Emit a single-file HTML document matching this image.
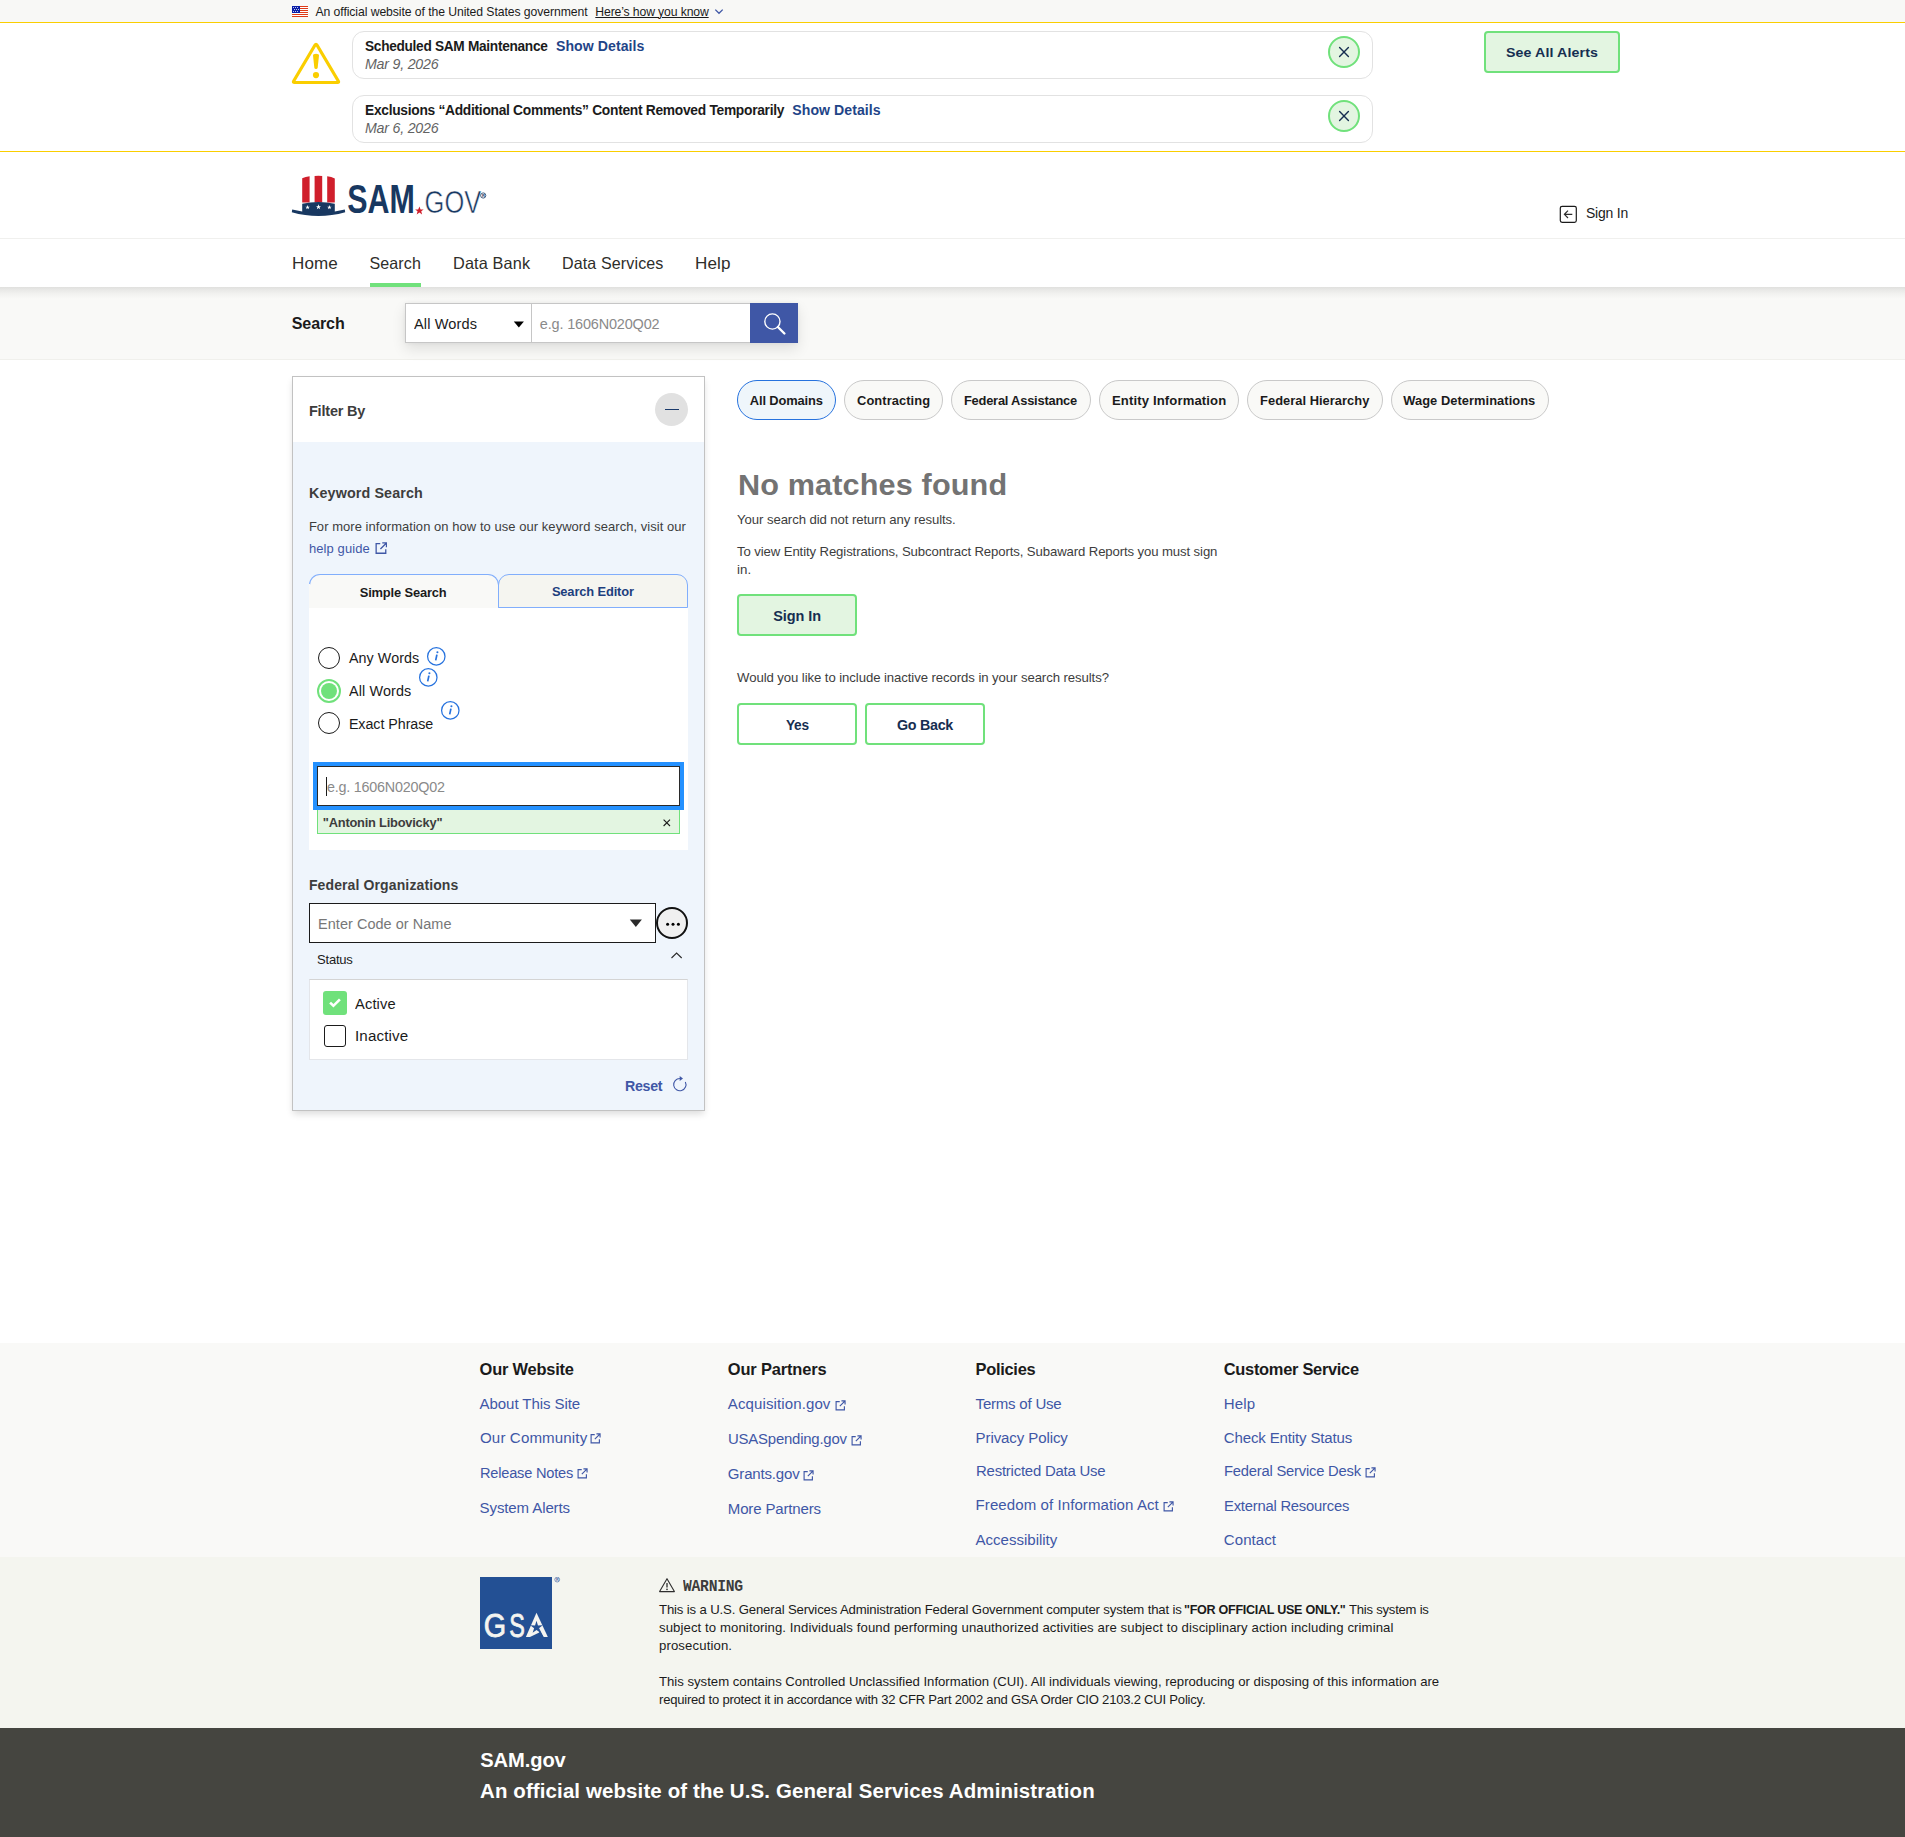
<!DOCTYPE html><html lang="en"><head><meta charset="utf-8"><title>SAM.gov | Search</title><style>
html,body{margin:0;padding:0;background:#fff}
body{width:1905px;height:1837px;position:relative;overflow:hidden;font-family:"Liberation Sans",sans-serif}
.a{position:absolute}
.t{position:absolute;white-space:pre;line-height:1;margin:0;padding:0;transform-origin:0 50%}
.card{width:1021px;height:48px;box-sizing:border-box;border:1px solid #e2e2e2;border-radius:12px;background:#fff}
.xbtn{width:32px;height:32px;box-sizing:border-box;border:2px solid #70e17b;border-radius:50%;background:#e3f5e1}
.gbtn{box-sizing:border-box;border:2px solid #70e17b;border-radius:4px;background:#fff}
.gbtn.fill{background:#e3f5e1}
.pill{top:380px;height:40px;box-sizing:border-box;border:1px solid #c9c9c9;border-radius:20px;background:#f9f9f7}
.pill.sel{border-color:#2672de;background:#eff6fb}
.ext{fill:none;stroke:#3f57a6;stroke-width:1.35}
.info{fill:none;stroke:#2672de;stroke-width:1.25}
.info .f{fill:#2672de;stroke:none}
</style></head><body>
<!-- backgrounds -->
<div class="a" style="left:0;top:0;width:1905px;height:22px;background:#f8f8f6"></div>
<div class="a" style="left:0;top:22px;width:1905px;height:1px;background:#face00"></div>
<div class="a" style="left:0;top:151px;width:1905px;height:1px;background:#face00"></div>
<div class="a" style="left:0;top:238px;width:1905px;height:1px;background:#f0f0ee"></div>
<div class="a" style="left:0;top:287px;width:1905px;height:72px;background:linear-gradient(#e0e0de 0,#e9e9e7 3px,#f2f2f0 7px,#f9f9f7 12px);border-bottom:1px solid #f0f0ec"></div>
<div class="a" style="left:0;top:1343px;width:1905px;height:214px;background:#f9f9f7"></div>
<div class="a" style="left:0;top:1557px;width:1905px;height:171px;background:#f4f5ef"></div>
<div class="a" style="left:0;top:1728px;width:1905px;height:109px;background:#454540"></div>

<!-- flag -->
<svg class="a" style="left:292px;top:6px" width="16" height="11" viewBox="0 0 16 11" shape-rendering="crispEdges">
<rect width="16" height="11" fill="#fff"/>
<g fill="#de3a17"><rect y="0" width="16" height="1"/><rect y="2" width="16" height="1"/><rect y="4" width="16" height="1"/><rect y="6" width="16" height="1"/><rect y="8" width="16" height="1"/><rect y="10" width="16" height="1"/></g>
<rect width="8" height="7" fill="#0b1fa8"/>
<g fill="#fff" shape-rendering="auto"><circle cx="1.5" cy="1.6" r=".5"/><circle cx="3.5" cy="1.6" r=".5"/><circle cx="5.5" cy="1.6" r=".5"/><circle cx="2.5" cy="3.5" r=".5"/><circle cx="4.5" cy="3.5" r=".5"/><circle cx="6.5" cy="3.5" r=".5"/><circle cx="1.5" cy="5.4" r=".5"/><circle cx="3.5" cy="5.4" r=".5"/><circle cx="5.5" cy="5.4" r=".5"/></g>
</svg>
<!-- chevron -->
<svg class="a" style="left:714px;top:8px" width="10" height="7" viewBox="0 0 10 7"><path d="M1.3 1.6 L5 5.3 L8.7 1.6" fill="none" stroke="#3f57a6" stroke-width="1.3"/></svg>

<!-- alert icon -->
<svg class="a" style="left:290px;top:40px" width="52" height="46" viewBox="290 40 52 46">
<path d="M314.9 45.2 Q316 43.3 317.1 45.2 L338.3 81 Q339.2 82.5 337.4 82.5 L294.6 82.5 Q292.8 82.5 293.7 81 Z" fill="none" stroke="#face00" stroke-width="3.2" stroke-linejoin="round"/>
<path d="M313 55.6 Q313 53.8 316 53.8 Q319 53.8 319 55.6 L317.7 67.6 Q317.5 69.1 316 69.1 Q314.5 69.1 314.3 67.6 Z" fill="#face00"/>
<circle cx="316" cy="75.1" r="3.1" fill="#face00"/>
</svg>
<!-- alert cards -->
<div class="a card" style="left:352px;top:31px"></div>
<div class="a card" style="left:352px;top:95px"></div>
<div class="a xbtn" style="left:1328px;top:36px"><svg width="28" height="28" viewBox="0 0 28 28"><path d="M9.6 9.6 L18.4 18.4 M18.4 9.6 L9.6 18.4" stroke="#162e51" stroke-width="1.4" stroke-linecap="round"/></svg></div>
<div class="a xbtn" style="left:1328px;top:100px"><svg width="28" height="28" viewBox="0 0 28 28"><path d="M9.6 9.6 L18.4 18.4 M18.4 9.6 L9.6 18.4" stroke="#162e51" stroke-width="1.4" stroke-linecap="round"/></svg></div>
<div class="a gbtn fill" style="left:1484px;top:31px;width:136px;height:42px"></div>

<!-- logo -->
<svg class="a" style="left:288px;top:172px" width="204" height="48" viewBox="288 172 204 48">
<g fill="#d01f2c">
<path d="M302.2 178.2 Q305.5 176.6 309.6 176.2 V202.6 H302.2 Z"/>
<path d="M314.6 175.9 Q318.5 175.5 322.2 175.9 V202.6 H314.6 Z"/>
<path d="M327.2 176.2 Q331.5 176.8 334.8 178.4 V202.6 H327.2 Z"/>
</g>
<path d="M302.2 203.8 Q318.5 200 334.8 203.8 V213.6 H302.2 Z" fill="#183861"/>
<path d="M292.2 209.6 Q318.5 216.6 344.8 209.6 L345.2 212.2 Q318.5 219.8 291.8 212.2 Z" fill="#183861"/>
<g fill="#fff">
<path id="st" d="M0 -2.3 L0.62 -0.72 L2.2 -0.72 L0.95 0.3 L1.4 1.9 L0 0.95 L-1.4 1.9 L-0.95 0.3 L-2.2 -0.72 L-0.62 -0.72 Z" transform="translate(307.6 207.4)"/>
<path d="M0 -2.3 L0.62 -0.72 L2.2 -0.72 L0.95 0.3 L1.4 1.9 L0 0.95 L-1.4 1.9 L-0.95 0.3 L-2.2 -0.72 L-0.62 -0.72 Z" transform="translate(318.5 207) scale(1.15)"/>
<path d="M0 -2.3 L0.62 -0.72 L2.2 -0.72 L0.95 0.3 L1.4 1.9 L0 0.95 L-1.4 1.9 L-0.95 0.3 L-2.2 -0.72 L-0.62 -0.72 Z" transform="translate(329.4 207.4)"/>
</g>
<text x="347.2" y="213" font-family="Liberation Sans, sans-serif" font-weight="700" font-size="40.5" fill="#183861" textLength="67.6" lengthAdjust="spacingAndGlyphs">SAM</text>
<path d="M0 -4.4 L1.2 -1.4 L4.3 -1.4 L1.85 0.55 L2.7 3.6 L0 1.8 L-2.7 3.6 L-1.85 0.55 L-4.3 -1.4 L-1.2 -1.4 Z" transform="translate(419.4 210.8)" fill="#d01f2c"/>
<text x="424.6" y="213" font-family="Liberation Sans, sans-serif" font-weight="400" font-size="31.4" fill="#183861" stroke="#fff" stroke-width="0.55" textLength="56.6" lengthAdjust="spacingAndGlyphs">GOV</text>
<circle cx="483.2" cy="195.5" r="2.6" fill="none" stroke="#183861" stroke-width="0.8"/>
<text x="481.9" y="197.2" font-family="Liberation Sans, sans-serif" font-weight="700" font-size="4.2" fill="#183861">R</text>
</svg>

<!-- sign in icon -->
<svg class="a" style="left:1559px;top:205px" width="19" height="19" viewBox="0 0 19 19">
<rect x="1.3" y="1.3" width="16" height="16" rx="1.8" fill="none" stroke="#1b1b1b" stroke-width="1.2"/>
<path d="M13.3 9.3 H5.6 M9 5.6 L5.4 9.3 L9 13" fill="none" stroke="#2e2e2e" stroke-width="1.2"/>
</svg>
<!-- nav underline -->
<div class="a" style="left:370px;top:283px;width:51px;height:4px;background:#70e17b"></div>

<!-- search group -->
<div class="a" style="left:405px;top:303px;width:393px;height:40px;box-shadow:0 6px 14px rgba(0,0,0,.105),0 0 4px rgba(0,0,0,.05)"></div>
<div class="a" style="left:405px;top:303px;width:127px;height:40px;background:#fff;border:1px solid #c6c6c6;box-sizing:border-box"></div>
<div class="a" style="left:531px;top:303px;width:219px;height:40px;background:#fff;border:1px solid #c6c6c6;border-right:0;box-sizing:border-box"></div>
<svg class="a" style="left:513px;top:321px" width="12" height="7" viewBox="0 0 12 7"><path d="M0.8 0.4 H10.9 L5.85 6.4 Z" fill="#000"/></svg>
<div class="a" style="left:750px;top:303px;width:48px;height:40px;background:#3f57a6"></div>
<svg class="a" style="left:750px;top:303px" width="48" height="40" viewBox="0 0 48 40">
<circle cx="22.4" cy="18.5" r="7.6" fill="none" stroke="#fff" stroke-width="1.4"/>
<path d="M27.9 24 L34.4 30.5" stroke="#fff" stroke-width="2.4" stroke-linecap="round"/>
</svg>

<!-- filter panel -->
<div class="a" style="left:292px;top:376px;width:413px;height:735px;box-sizing:border-box;border:1px solid #c2c2c2;background:#eff5fc;box-shadow:0 4px 7px -1px rgba(0,0,0,.14)"></div>
<div class="a" style="left:293px;top:377px;width:411px;height:65px;background:#fff"></div>
<div class="a" style="left:655px;top:393px;width:33px;height:33px;border-radius:50%;background:#e1e1e1"></div>
<div class="a" style="left:665px;top:409px;width:14px;height:1px;background:#1a3a6b"></div>
<!-- help guide ext icon -->
<svg class="a ext" style="left:374.8px;top:542.4px" width="12.4" height="12.4" viewBox="0 0 13 13"><path d="M5.5 1.7 H1.2 V11.8 H11.3 V7.5"/><path d="M7.6 1 H12 V5.4 M12 1 L5.7 7.3"/></svg>
<!-- tabs -->
<div class="a" style="left:309px;top:574px;width:190px;height:34px;box-sizing:border-box;background:#f9f9f7;border:1px solid #81aefc;border-bottom:0;border-radius:11px 11px 0 0"></div>
<div class="a" style="left:309px;top:584px;width:1px;height:24px;background:#f9f9f7"></div>
<div class="a" style="left:498px;top:574px;width:190px;height:34px;box-sizing:border-box;background:#f5f5f0;border:1px solid #81aefc;border-radius:11px 11px 0 0"></div>
<div class="a" style="left:309px;top:608px;width:379px;height:242px;background:#fff"></div>
<!-- radios -->
<div class="a" style="left:318px;top:647px;width:22px;height:22px;box-sizing:border-box;border:1.5px solid #1b1b1b;border-radius:50%;background:#fff"></div>
<div class="a" style="left:317px;top:679px;width:24px;height:24px;box-sizing:border-box;border:2px solid #70e17b;border-radius:50%;background:#fff"></div>
<div class="a" style="left:321px;top:683px;width:16px;height:16px;border-radius:50%;background:#70e17b"></div>
<div class="a" style="left:318px;top:712px;width:22px;height:22px;box-sizing:border-box;border:1.5px solid #1b1b1b;border-radius:50%;background:#fff"></div>
<!-- info icons -->
<svg class="a info" style="left:426px;top:646px" width="21" height="21" viewBox="0 0 21 21"><circle cx="10.3" cy="10.4" r="8.7"/><path d="M10.9 8.6 L9.7 14.4" stroke-width="1.7"/><circle cx="11.4" cy="6.2" r="1.05" class="f"/></svg>
<svg class="a info" style="left:418px;top:667px" width="21" height="21" viewBox="0 0 21 21"><circle cx="10.3" cy="10.4" r="8.7"/><path d="M10.9 8.6 L9.7 14.4" stroke-width="1.7"/><circle cx="11.4" cy="6.2" r="1.05" class="f"/></svg>
<svg class="a info" style="left:440px;top:700px" width="21" height="21" viewBox="0 0 21 21"><circle cx="10.3" cy="10.4" r="8.7"/><path d="M10.9 8.6 L9.7 14.4" stroke-width="1.7"/><circle cx="11.4" cy="6.2" r="1.05" class="f"/></svg>
<!-- keyword input -->
<div class="a" style="left:317px;top:809px;width:363px;height:25px;box-sizing:border-box;border:1px solid #70e17b;background:#e3f5e1"></div>
<div class="a" style="left:313px;top:762px;width:371px;height:48px;background:#2491ff"></div>
<div class="a" style="left:317px;top:766px;width:363px;height:40px;box-sizing:border-box;border:1px solid #2a2a2a;background:#fff"></div>
<div class="a" style="left:326px;top:777px;width:1px;height:19px;background:#1b1b1b"></div>
<svg class="a" style="left:662px;top:818px" width="10" height="10" viewBox="0 0 10 10"><path d="M1.6 1.6 L8 8 M8 1.6 L1.6 8" stroke="#1b1b1b" stroke-width="1.1"/></svg>
<!-- fed org -->
<div class="a" style="left:309px;top:903px;width:347px;height:40px;box-sizing:border-box;border:1px solid #1b1b1b;background:#fff"></div>
<svg class="a" style="left:629px;top:919px" width="14" height="9" viewBox="0 0 14 9"><path d="M0.8 0.5 H12.9 L6.85 7.9 Z" fill="#2a2a2a"/></svg>
<div class="a" style="left:656px;top:907px;width:32px;height:32px;box-sizing:border-box;border:2px solid #111;border-radius:50%;background:#f0f0f0"></div>
<svg class="a" style="left:664px;top:921px" width="18" height="6" viewBox="0 0 18 6"><circle cx="3.6" cy="3.2" r="1.5"/><circle cx="9" cy="3.2" r="1.5"/><circle cx="14.4" cy="3.2" r="1.5"/></svg>
<!-- status -->
<svg class="a" style="left:670px;top:951px" width="13" height="9" viewBox="0 0 13 9"><path d="M1.5 7 L6.6 2 L11.7 7" fill="none" stroke="#2a2a2a" stroke-width="1.1"/></svg>
<div class="a" style="left:309px;top:979px;width:379px;height:81px;box-sizing:border-box;border:1px solid #e4e6ea;border-top-color:#d4d4d4;background:#fff"></div>
<div class="a" style="left:323px;top:991px;width:24px;height:24px;border-radius:3px;background:#70e17b"></div>
<svg class="a" style="left:323px;top:991px" width="24" height="24" viewBox="0 0 24 24"><path d="M7.1 11.6 L10.4 14.8 L16.9 8.3" fill="none" stroke="#fff" stroke-width="2.6"/></svg>
<div class="a" style="left:324px;top:1025px;width:22px;height:22px;box-sizing:border-box;border:1.5px solid #1b1b1b;border-radius:3px;background:#fff"></div>
<!-- reset icon -->
<svg class="a" style="left:671px;top:1075px" width="17" height="18" viewBox="0 0 17 18"><path d="M8.9 3.45 A6.15 6.15 0 1 0 14.35 6.9" fill="none" stroke="#3f57a6" stroke-width="1.1"/><path d="M8.7 1.1 L12 3.55 L8.7 5.9 Z" fill="#3f57a6"/></svg>

<!-- pills -->
<div class="a pill sel" style="left:737px;width:99px"></div>
<div class="a pill" style="left:844px;width:99px"></div>
<div class="a pill" style="left:951px;width:140px"></div>
<div class="a pill" style="left:1099px;width:140px"></div>
<div class="a pill" style="left:1247px;width:136px"></div>
<div class="a pill" style="left:1391px;width:158px"></div>
<!-- buttons -->
<div class="a gbtn fill" style="left:737px;top:594px;width:120px;height:42px"></div>
<div class="a gbtn" style="left:737px;top:703px;width:120px;height:42px"></div>
<div class="a gbtn" style="left:865px;top:703px;width:120px;height:42px"></div>

<!-- footer ext icons -->
<svg class="a ext" style="left:590px;top:1432.5px" width="11" height="11" viewBox="0 0 13 13"><path d="M5.6 1.9 H1.3 V11.7 H11.1 V7.4"/><path d="M7.6 1.1 H11.9 V5.4 M11.9 1.1 L5.7 7.3"/></svg>
<svg class="a ext" style="left:576.5px;top:1467.5px" width="11" height="11" viewBox="0 0 13 13"><path d="M5.6 1.9 H1.3 V11.7 H11.1 V7.4"/><path d="M7.6 1.1 H11.9 V5.4 M11.9 1.1 L5.7 7.3"/></svg>
<svg class="a ext" style="left:834.5px;top:1399.5px" width="11" height="11" viewBox="0 0 13 13"><path d="M5.6 1.9 H1.3 V11.7 H11.1 V7.4"/><path d="M7.6 1.1 H11.9 V5.4 M11.9 1.1 L5.7 7.3"/></svg>
<svg class="a ext" style="left:850.5px;top:1434.5px" width="11" height="11" viewBox="0 0 13 13"><path d="M5.6 1.9 H1.3 V11.7 H11.1 V7.4"/><path d="M7.6 1.1 H11.9 V5.4 M11.9 1.1 L5.7 7.3"/></svg>
<svg class="a ext" style="left:803px;top:1469.5px" width="11" height="11" viewBox="0 0 13 13"><path d="M5.6 1.9 H1.3 V11.7 H11.1 V7.4"/><path d="M7.6 1.1 H11.9 V5.4 M11.9 1.1 L5.7 7.3"/></svg>
<svg class="a ext" style="left:1162.5px;top:1500.5px" width="11" height="11" viewBox="0 0 13 13"><path d="M5.6 1.9 H1.3 V11.7 H11.1 V7.4"/><path d="M7.6 1.1 H11.9 V5.4 M11.9 1.1 L5.7 7.3"/></svg>
<svg class="a ext" style="left:1364.5px;top:1466.5px" width="11" height="11" viewBox="0 0 13 13"><path d="M5.6 1.9 H1.3 V11.7 H11.1 V7.4"/><path d="M7.6 1.1 H11.9 V5.4 M11.9 1.1 L5.7 7.3"/></svg>

<!-- GSA -->
<div class="a" style="left:480px;top:1577px;width:72px;height:72px;background:#235094"></div>
<svg class="a" style="left:480px;top:1577px" width="82" height="72" viewBox="0 0 82 72">
<text x="3.7" y="59.9" font-family="Liberation Sans, sans-serif" font-size="34" fill="#f4f4f0" stroke="#f4f4f0" stroke-width="0.8" textLength="22.4" lengthAdjust="spacingAndGlyphs">G</text>
<text x="29.2" y="59.9" font-family="Liberation Sans, sans-serif" font-size="34" fill="#f4f4f0" stroke="#f4f4f0" stroke-width="0.8" textLength="15.6" lengthAdjust="spacingAndGlyphs">S</text>
<path d="M56.5 35.8 L67.85 60.05 L45.9 60.05 Z" fill="#f4f4f0"/>
<path d="M56.50 43.80 L57.97 48.38 L62.78 48.36 L58.88 51.17 L60.38 55.74 L56.50 52.90 L52.62 55.74 L54.12 51.17 L50.22 48.36 L55.03 48.38 Z" fill="#235094"/>
<path d="M49.95 60.05 L63.55 60.05 L59 50.9 L59.3 55.4 Z" fill="#235094"/>
<path d="M59.6 53.6 L63.55 60.05 L60 60.05 Z" fill="#235094"/>
<circle cx="77.2" cy="2.6" r="2.4" fill="none" stroke="#4a6da8" stroke-width="0.7"/>
<text x="76" y="4" font-family="Liberation Sans, sans-serif" font-weight="700" font-size="3.8" fill="#4a6da8">R</text>
</svg>
<!-- footer warning icon -->
<svg class="a" style="left:658px;top:1577px" width="18" height="16" viewBox="0 0 18 16"><path d="M9 1.7 L16.4 14.6 H1.6 Z" fill="none" stroke="#2e2e2e" stroke-width="1.1" stroke-linejoin="round"/><path d="M9 6 V10.6" stroke="#2e2e2e" stroke-width="1.3"/><circle cx="9" cy="12.4" r="0.8" fill="#2e2e2e"/></svg>

<!-- text -->
<div class="t" style="left:315.50px;top:5.60px;font-size:12.22px;font-weight:400;color:#1b1b1b;letter-spacing:-0.082px;">An official website of the United States government</div>
<div class="t" style="left:595.30px;top:5.60px;font-size:12.22px;font-weight:400;color:#1b1b1b;text-decoration:underline;text-underline-offset:1px;letter-spacing:-0.135px;">Here’s how you know</div>
<div class="t" style="left:364.50px;top:38.80px;font-size:14.1px;font-weight:700;color:#1b1b1b;letter-spacing:-0.300px;transform:scaleX(0.9693);">Scheduled SAM Maintenance</div>
<div class="t" style="left:556.00px;top:38.80px;font-size:14.1px;font-weight:700;color:#1f4588;letter-spacing:0.053px;">Show Details</div>
<div class="t" style="left:364.50px;top:55.60px;font-size:15.04px;font-weight:400;color:#636363;font-style:italic;letter-spacing:-0.220px;transform:scaleX(0.9434);">Mar 9, 2026</div>
<div class="t" style="left:364.50px;top:102.80px;font-size:14.1px;font-weight:700;color:#1b1b1b;letter-spacing:-0.300px;transform:scaleX(0.9790);">Exclusions “Additional Comments” Content Removed Temporarily</div>
<div class="t" style="left:792.30px;top:102.80px;font-size:14.1px;font-weight:700;color:#1f4588;letter-spacing:0.053px;">Show Details</div>
<div class="t" style="left:364.50px;top:119.60px;font-size:15.04px;font-weight:400;color:#636363;font-style:italic;letter-spacing:-0.220px;transform:scaleX(0.9434);">Mar 6, 2026</div>
<div class="t" style="left:1506.20px;top:46.30px;font-size:13.63px;font-weight:700;color:#162e51;letter-spacing:0.120px;transform:scaleX(1.0395);">See All Alerts</div>
<div class="t" style="left:1585.50px;top:204.80px;font-size:15.04px;font-weight:400;color:#1b1b1b;letter-spacing:-0.220px;transform:scaleX(0.9279);">Sign In</div>
<div class="t" style="left:291.80px;top:254.80px;font-size:16.07px;font-weight:400;color:#2e2e2a;letter-spacing:0.120px;transform:scaleX(1.0597);">Home</div>
<div class="t" style="left:369.40px;top:254.80px;font-size:16.07px;font-weight:400;color:#2e2e2a;letter-spacing:0.120px;">Search</div>
<div class="t" style="left:453.20px;top:254.80px;font-size:16.07px;font-weight:400;color:#2e2e2a;letter-spacing:0.120px;transform:scaleX(1.0148);">Data Bank</div>
<div class="t" style="left:562.00px;top:254.80px;font-size:16.07px;font-weight:400;color:#2e2e2a;letter-spacing:0.118px;">Data Services</div>
<div class="t" style="left:695.10px;top:254.80px;font-size:16.07px;font-weight:400;color:#2e2e2a;letter-spacing:0.120px;transform:scaleX(1.0627);">Help</div>
<div class="t" style="left:291.80px;top:314.90px;font-size:16.07px;font-weight:700;color:#1b1b1b;letter-spacing:-0.136px;">Search</div>
<div class="t" style="left:413.50px;top:316.90px;font-size:14.01px;font-weight:400;color:#1b1b1b;letter-spacing:0.120px;transform:scaleX(1.0393);">All Words</div>
<div class="t" style="left:539.80px;top:316.90px;font-size:14.48px;font-weight:400;color:#8a8a8a;letter-spacing:-0.165px;">e.g. 1606N020Q02</div>
<div class="t" style="left:308.90px;top:404.00px;font-size:14.48px;font-weight:700;color:#3d3d3d;letter-spacing:-0.174px;">Filter By</div>
<div class="t" style="left:308.90px;top:485.90px;font-size:14.01px;font-weight:700;color:#3d3d3d;letter-spacing:0.120px;transform:scaleX(1.0227);">Keyword Search</div>
<div class="t" style="left:308.90px;top:521.00px;font-size:12.97px;font-weight:400;color:#3d3d3d;letter-spacing:0.058px;">For more information on how to use our keyword search, visit our</div>
<div class="t" style="left:308.90px;top:542.50px;font-size:12.97px;font-weight:400;color:#3f57a6;letter-spacing:0.120px;">help guide</div>
<div class="t" style="left:359.70px;top:587.20px;font-size:12.88px;font-weight:700;color:#1b1b1b;letter-spacing:-0.146px;">Simple Search</div>
<div class="t" style="left:551.90px;top:586.20px;font-size:12.88px;font-weight:700;color:#1d3f7e;letter-spacing:-0.135px;">Search Editor</div>
<div class="t" style="left:348.90px;top:651.00px;font-size:14.29px;font-weight:400;color:#1b1b1b;letter-spacing:0.088px;">Any Words</div>
<div class="t" style="left:348.90px;top:683.80px;font-size:14.29px;font-weight:400;color:#1b1b1b;letter-spacing:0.120px;transform:scaleX(1.0064);">All Words</div>
<div class="t" style="left:348.90px;top:716.80px;font-size:14.29px;font-weight:400;color:#1b1b1b;letter-spacing:-0.049px;">Exact Phrase</div>
<div class="t" style="left:327.40px;top:780.20px;font-size:14.48px;font-weight:400;color:#8a8a8a;letter-spacing:-0.220px;transform:scaleX(0.9909);">e.g. 1606N020Q02</div>
<div class="t" style="left:322.80px;top:817.30px;font-size:12.88px;font-weight:700;color:#3d3d3d;letter-spacing:-0.228px;">"Antonin Libovicky"</div>
<div class="t" style="left:308.90px;top:878.00px;font-size:14.01px;font-weight:700;color:#3d3d3d;letter-spacing:0.120px;">Federal Organizations</div>
<div class="t" style="left:318.10px;top:916.90px;font-size:14.48px;font-weight:400;color:#777;letter-spacing:0.041px;">Enter Code or Name</div>
<div class="t" style="left:317.00px;top:952.90px;font-size:13.16px;font-weight:400;color:#1b1b1b;letter-spacing:-0.220px;transform:scaleX(0.9914);">Status</div>
<div class="t" style="left:354.60px;top:996.70px;font-size:14.29px;font-weight:400;color:#1b1b1b;letter-spacing:0.120px;transform:scaleX(1.0281);">Active</div>
<div class="t" style="left:354.60px;top:1028.60px;font-size:14.29px;font-weight:400;color:#1b1b1b;letter-spacing:0.120px;transform:scaleX(1.0608);">Inactive</div>
<div class="t" style="left:624.80px;top:1077.90px;font-size:15.04px;font-weight:600;color:#3f57a6;letter-spacing:-0.300px;transform:scaleX(0.9458);">Reset</div>
<div class="t" style="left:749.80px;top:395.20px;font-size:12.88px;font-weight:700;color:#1b1b1b;letter-spacing:-0.131px;">All Domains</div>
<div class="t" style="left:857.00px;top:395.20px;font-size:12.88px;font-weight:700;color:#1b1b1b;letter-spacing:0.085px;">Contracting</div>
<div class="t" style="left:963.90px;top:395.20px;font-size:12.88px;font-weight:700;color:#1b1b1b;letter-spacing:-0.211px;">Federal Assistance</div>
<div class="t" style="left:1111.50px;top:395.20px;font-size:12.88px;font-weight:700;color:#1b1b1b;letter-spacing:0.120px;transform:scaleX(1.0179);">Entity Information</div>
<div class="t" style="left:1260.10px;top:395.20px;font-size:12.88px;font-weight:700;color:#1b1b1b;letter-spacing:0.026px;">Federal Hierarchy</div>
<div class="t" style="left:1403.20px;top:395.20px;font-size:12.88px;font-weight:700;color:#1b1b1b;letter-spacing:0.052px;">Wage Determinations</div>
<div class="t" style="left:738.00px;top:469.70px;font-size:30.08px;font-weight:700;color:#737373;letter-spacing:0.120px;transform:scaleX(1.0190);">No matches found</div>
<div class="t" style="left:737.10px;top:512.60px;font-size:13.16px;font-weight:400;color:#3d3d3d;letter-spacing:-0.085px;">Your search did not return any results.</div>
<div class="t" style="left:737.10px;top:544.90px;font-size:13.16px;font-weight:400;color:#3d3d3d;letter-spacing:-0.111px;">To view Entity Registrations, Subcontract Reports, Subaward Reports you must sign</div>
<div class="t" style="left:737.10px;top:562.70px;font-size:13.16px;font-weight:400;color:#3d3d3d;letter-spacing:0.120px;transform:scaleX(1.0109);">in.</div>
<div class="t" style="left:773.20px;top:609.10px;font-size:14.48px;font-weight:700;color:#162e51;letter-spacing:-0.039px;">Sign In</div>
<div class="t" style="left:737.10px;top:671.10px;font-size:13.16px;font-weight:400;color:#3d3d3d;letter-spacing:-0.080px;">Would you like to include inactive records in your search results?</div>
<div class="t" style="left:785.80px;top:717.70px;font-size:14.48px;font-weight:700;color:#162e51;letter-spacing:-0.300px;transform:scaleX(0.9444);">Yes</div>
<div class="t" style="left:897.00px;top:717.70px;font-size:14.48px;font-weight:700;color:#162e51;letter-spacing:-0.300px;transform:scaleX(0.9894);">Go Back</div>
<div class="t" style="left:479.60px;top:1360.80px;font-size:16.45px;font-weight:700;color:#1b1b1b;letter-spacing:-0.222px;">Our Website</div>
<div class="t" style="left:727.80px;top:1360.80px;font-size:16.45px;font-weight:700;color:#1b1b1b;letter-spacing:-0.155px;">Our Partners</div>
<div class="t" style="left:975.60px;top:1360.80px;font-size:16.45px;font-weight:700;color:#1b1b1b;letter-spacing:-0.300px;">Policies</div>
<div class="t" style="left:1223.80px;top:1360.80px;font-size:16.45px;font-weight:700;color:#1b1b1b;letter-spacing:-0.300px;">Customer Service</div>
<div class="t" style="left:479.60px;top:1395.80px;font-size:15.04px;font-weight:400;color:#3f57a6;letter-spacing:-0.077px;">About This Site</div>
<div class="t" style="left:479.60px;top:1430.30px;font-size:15.04px;font-weight:400;color:#3f57a6;letter-spacing:0.120px;transform:scaleX(1.0048);">Our Community</div>
<div class="t" style="left:479.60px;top:1465.10px;font-size:15.04px;font-weight:400;color:#3f57a6;letter-spacing:-0.220px;transform:scaleX(0.9723);">Release Notes</div>
<div class="t" style="left:479.60px;top:1499.90px;font-size:15.04px;font-weight:400;color:#3f57a6;letter-spacing:-0.116px;">System Alerts</div>
<div class="t" style="left:727.80px;top:1396.30px;font-size:15.04px;font-weight:400;color:#3f57a6;letter-spacing:0.106px;">Acquisition.gov</div>
<div class="t" style="left:727.80px;top:1431.10px;font-size:15.04px;font-weight:400;color:#3f57a6;letter-spacing:-0.220px;transform:scaleX(0.9936);">USASpending.gov</div>
<div class="t" style="left:727.80px;top:1466.10px;font-size:15.04px;font-weight:400;color:#3f57a6;letter-spacing:-0.181px;">Grants.gov</div>
<div class="t" style="left:727.80px;top:1500.90px;font-size:15.04px;font-weight:400;color:#3f57a6;letter-spacing:-0.161px;">More Partners</div>
<div class="t" style="left:975.60px;top:1395.80px;font-size:15.04px;font-weight:400;color:#3f57a6;letter-spacing:-0.220px;">Terms of Use</div>
<div class="t" style="left:975.60px;top:1429.80px;font-size:15.04px;font-weight:400;color:#3f57a6;letter-spacing:-0.097px;">Privacy Policy</div>
<div class="t" style="left:975.60px;top:1463.10px;font-size:15.04px;font-weight:400;color:#3f57a6;letter-spacing:-0.220px;transform:scaleX(0.9928);">Restricted Data Use</div>
<div class="t" style="left:975.60px;top:1497.10px;font-size:15.04px;font-weight:400;color:#3f57a6;letter-spacing:0.076px;">Freedom of Information Act</div>
<div class="t" style="left:975.60px;top:1531.60px;font-size:15.04px;font-weight:400;color:#3f57a6;letter-spacing:-0.013px;">Accessibility</div>
<div class="t" style="left:1223.80px;top:1395.80px;font-size:15.04px;font-weight:400;color:#3f57a6;letter-spacing:0.120px;">Help</div>
<div class="t" style="left:1223.80px;top:1429.80px;font-size:15.04px;font-weight:400;color:#3f57a6;letter-spacing:-0.148px;">Check Entity Status</div>
<div class="t" style="left:1223.80px;top:1463.10px;font-size:15.04px;font-weight:400;color:#3f57a6;letter-spacing:-0.220px;transform:scaleX(0.9827);">Federal Service Desk</div>
<div class="t" style="left:1223.80px;top:1498.40px;font-size:15.04px;font-weight:400;color:#3f57a6;letter-spacing:-0.220px;transform:scaleX(0.9833);">External Resources</div>
<div class="t" style="left:1223.80px;top:1531.60px;font-size:15.04px;font-weight:400;color:#3f57a6;letter-spacing:0.065px;">Contact</div>
<div class="t" style="left:682.90px;top:1579.00px;font-size:16.54px;font-weight:700;color:#3d3d3d;letter-spacing:-0.300px;transform:scaleX(0.8884);font-family:'Liberation Mono', monospace;">WARNING</div>
<div class="t" style="left:659.00px;top:1603.20px;font-size:13.16px;font-weight:400;color:#1b1b1b;letter-spacing:-0.149px;">This is a U.S. General Services Administration Federal Government computer system that is</div>
<div class="t" style="left:1184.40px;top:1603.20px;font-size:13.16px;font-weight:700;color:#1b1b1b;letter-spacing:-0.300px;transform:scaleX(0.9556);">"FOR OFFICIAL USE ONLY."</div>
<div class="t" style="left:1348.70px;top:1603.20px;font-size:13.16px;font-weight:400;color:#1b1b1b;letter-spacing:-0.220px;transform:scaleX(0.9927);">This system is</div>
<div class="t" style="left:659.00px;top:1621.30px;font-size:13.16px;font-weight:400;color:#1b1b1b;letter-spacing:0.093px;">subject to monitoring. Individuals found performing unauthorized activities are subject to disciplinary action including criminal</div>
<div class="t" style="left:659.00px;top:1639.20px;font-size:13.16px;font-weight:400;color:#1b1b1b;letter-spacing:0.120px;">prosecution.</div>
<div class="t" style="left:659.00px;top:1675.00px;font-size:13.16px;font-weight:400;color:#1b1b1b;letter-spacing:-0.006px;">This system contains Controlled Unclassified Information (CUI). All individuals viewing, reproducing or disposing of this information are</div>
<div class="t" style="left:659.00px;top:1693.10px;font-size:13.16px;font-weight:400;color:#1b1b1b;letter-spacing:-0.220px;transform:scaleX(0.9920);">required to protect it in accordance with 32 CFR Part 2002 and GSA Order CIO 2103.2 CUI Policy.</div>
<div class="t" style="left:480.20px;top:1750.00px;font-size:20.12px;font-weight:600;color:#fff;letter-spacing:-0.072px;">SAM.gov</div>
<div class="t" style="left:480.20px;top:1780.90px;font-size:20.12px;font-weight:600;color:#fff;letter-spacing:0.120px;transform:scaleX(1.0168);">An official website of the U.S. General Services Administration</div>
</body></html>
